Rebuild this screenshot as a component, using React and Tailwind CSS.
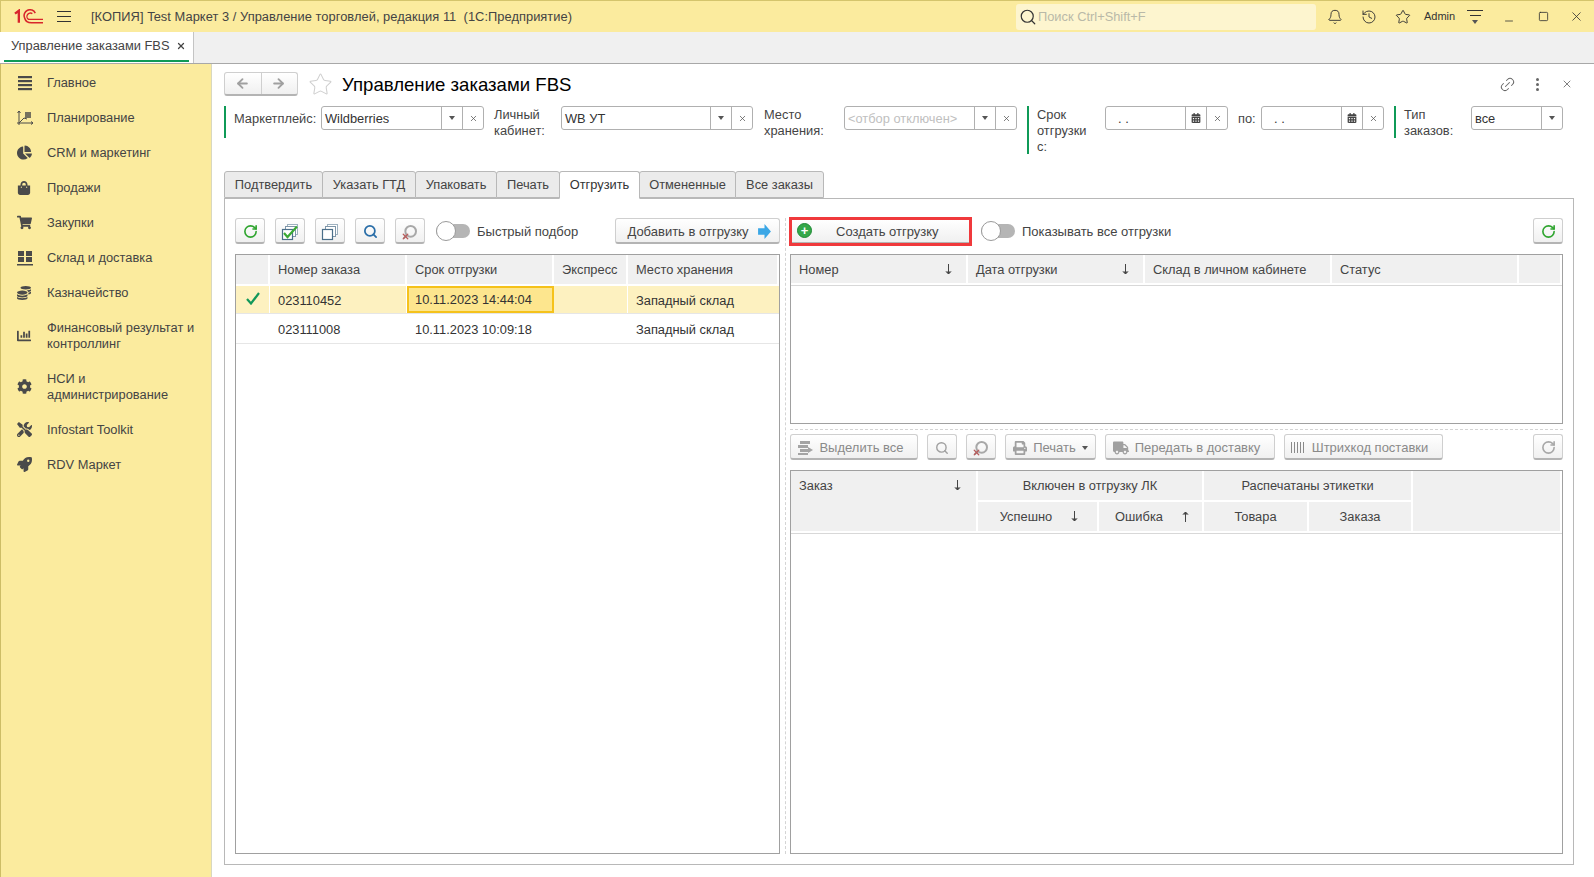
import React from 'react';
import { ArrowLeft, ArrowRight, Star, Bell, History, Link2, X, Minus, Square, Search, RotateCw } from 'lucide-react';
import {
  FaChartPie, FaShoppingBag, FaShoppingCart, FaCoins, FaChartBar, FaCog, FaTools, FaRocket, FaPrint, FaTruck, FaCalendarAlt,
} from 'react-icons/fa';

// 1C logo
const Logo = () => (
  <svg width="29" height="16" viewBox="0 0 30 16" fill="none" stroke="#d8262c" strokeWidth="1.6">
    <path d="M1 4.5 L5 1.5 V14" strokeWidth="2.4" />
    <path d="M22 4 A6 6 0 1 0 11 9 C12 13 15 14 18 14 H30" strokeWidth="1.6" />
    <path d="M19 4.5 A3.5 3.5 0 1 0 15 10.5 L30 10.5" strokeWidth="1.4" />
  </svg>
);

const LinesIcon = () => (
  <svg width="16" height="16" viewBox="0 0 16 16" fill="#4a4a4a">
    <rect x="1" y="1" width="14" height="2.2" />
    <rect x="1" y="5" width="14" height="2.2" />
    <rect x="1" y="9" width="14" height="2.2" />
    <rect x="1" y="13" width="14" height="2.2" />
  </svg>
);

const PlanIcon = () => (
  <svg width="16" height="16" viewBox="0 0 16 16" fill="none" stroke="#4a4a4a" strokeWidth="1">
    <path d="M2 1 V15 M0 13 H16 M2 13 L7 8 L10 9" />
    <path d="M0.5 3 L2 1 L3.5 3 M14 11.5 L16 13 L14 14.5" />
    <path d="M8 3 H14 M8 5 H14 M8 7 H14" strokeWidth="1.6" />
  </svg>
);

const GridIcon = () => (
  <svg width="16" height="16" viewBox="0 0 16 16" fill="#4a4a4a">
    <rect x="1" y="1" width="6" height="5" />
    <rect x="9" y="1" width="6" height="5" />
    <rect x="1" y="7" width="6" height="5" />
    <rect x="9" y="7" width="6" height="5" />
    <rect x="0" y="14" width="16" height="1.5" />
  </svg>
);

const navItems = [
  { label: 'Главное', icon: <LinesIcon />, h: 'h-[35px]' },
  { label: 'Планирование', icon: <PlanIcon />, h: 'h-[35px]' },
  { label: 'CRM и маркетинг', icon: <FaChartPie size={15} />, h: 'h-[35px]' },
  { label: 'Продажи', icon: <FaShoppingBag size={14} />, h: 'h-[35px]' },
  { label: 'Закупки', icon: <FaShoppingCart size={15} />, h: 'h-[35px]' },
  { label: 'Склад и доставка', icon: <GridIcon />, h: 'h-[35px]' },
  { label: 'Казначейство', icon: <FaCoins size={14} />, h: 'h-[35px]' },
  { label: 'Финансовый результат и контроллинг', icon: <FaChartBar size={14} />, h: 'h-[51px]' },
  { label: 'НСИ и администрирование', icon: <FaCog size={15} />, h: 'h-[51px]' },
  { label: 'Infostart Toolkit', icon: <FaTools size={15} />, h: 'h-[35px]' },
  { label: 'RDV Маркет', icon: <FaRocket size={15} />, h: 'h-[35px]' },
];

const tabs = [
  { label: 'Подтвердить', w: 'w-[99px]' },
  { label: 'Указать ГТД', w: 'w-[94px]' },
  { label: 'Упаковать', w: 'w-[82px]' },
  { label: 'Печать', w: 'w-[64px]' },
  { label: 'Отгрузить', w: 'w-[81px]', active: true },
  { label: 'Отмененные', w: 'w-[97px]' },
  { label: 'Все заказы', w: 'w-[89px]' },
];

const Caret = () => <div className="w-0 h-0 border-x-[3.5px] border-x-transparent border-t-[4px] border-t-[#555]" />;

const Field = ({ width, value, placeholder, mono, dropdown, calendar, clear = true }) => (
  <div className={`${width} h-6 flex border border-[#b0b0b0] rounded-[3px] bg-white shrink-0`}>
    <div className={`flex-1 min-w-0 leading-[23px] ${placeholder ? 'text-[#c0c0c0]' : 'text-[#333]'} ${mono ? 'pl-[12px]' : 'px-[3px]'}`}>
      {value}
    </div>
    {dropdown && (
      <div className="w-[21px] border-l border-[#b0b0b0] flex items-center justify-center"><Caret /></div>
    )}
    {calendar && (
      <div className="w-[21px] border-l border-[#b0b0b0] flex items-center justify-center">
        <FaCalendarAlt size={10} color="#444" />
      </div>
    )}
    {clear && (
      <div className="w-[21px] border-l border-[#b0b0b0] flex items-center justify-center">
        <X size={9} color="#555" strokeWidth={2} />
      </div>
    )}
  </div>
);

const Btn = ({ className = '', children, disabled }) => (
  <div className={`h-[26px] shrink-0 flex items-center justify-center rounded-[3px] border border-[#cfcfcf] border-b-2 border-b-[#b4b4b4] bg-gradient-to-b from-white to-[#f0f0f0] text-[13px] leading-[14px] pt-[2px] ${disabled ? 'text-[#8a8a8a]' : 'text-[#444]'} ${className}`}>
    {children}
  </div>
);

const Toggle = () => (
  <div className="w-[34px] h-[20px] shrink-0 relative flex items-center">
    <div className="w-full h-[14px] rounded-full bg-[#b5b5b5]" />
    <div className="absolute left-0 top-0 w-[20px] h-[20px] rounded-full bg-white border border-[#9a9a9a]" />
  </div>
);

const StackIcon = ({ check }) => (
  <svg width="18" height="18" viewBox="0 0 18 18" fill="none" stroke="#4b6f8a" strokeWidth="1">
    <rect x="6.5" y="1.5" width="10" height="10" fill="#fff" stroke="#9fb2c0" />
    <rect x="4.5" y="3.5" width="10" height="10" fill="#fff" stroke="#7d95a8" />
    <rect x="1.5" y="6.5" width="10" height="10" fill="#fff" strokeWidth="1.2" />
    {check && <path d="M3 10 L6.5 14 L16 3.5" stroke="#3aa935" strokeWidth="2.2" />}
  </svg>
);

const SelectAllIcon = () => (
  <svg width="16" height="16" viewBox="0 0 16 16" fill="#a4a4a4">
    <rect x="3" y="1" width="10" height="3" />
    <rect x="1" y="5" width="10" height="3" />
    <rect x="3" y="9" width="10" height="3" />
    <rect x="1" y="13" width="10" height="2" />
    <path d="M11 7 L16 10 L11 13 Z" />
  </svg>
);

const Refresh = ({ color = '#2fa52f' }) => <RotateCw size={15} color={color} strokeWidth={2.6} />;

const ClearSearch = ({ color = '#a8a8a8' }) => (
  <span className="relative inline-flex">
    <Search size={16} color={color} strokeWidth={3} className="-scale-x-100" />
    <X size={9} color="#b85c5c" strokeWidth={3.4} className="absolute left-[-1px] bottom-[-1px]" />
  </span>
);

const SortArrow = ({ up }) => (
  <svg width="7" height="11" viewBox="0 0 7 11" fill="none" stroke="#444" strokeWidth="1" className={up ? 'rotate-180' : ''}>
    <path d="M3.5 0 V10" />
    <path d="M1 7.5 L3.5 10 L6 7.5" fill="#444" />
  </svg>
);

const HeadCell = ({ className = '', children }) => (
  <div className={`bg-[#f0f0f0] border-r-2 border-b-2 border-white flex items-center ${className}`}>{children}</div>
);

export default function App() {
  return (
    <div className="w-[1594px] h-[877px] flex flex-col overflow-hidden bg-white text-[12.85px] text-[#444] font-['Liberation_Sans',Arial,sans-serif]">
      {/* Title bar */}
      <div className="h-8 shrink-0 flex items-center bg-[#fbeb9e] border-t border-[#d4c46c] border-l pl-[13px]">
        <Logo />
        <div className="ml-[14px] w-[14px] flex flex-col gap-[4px]">
          <div className="h-px bg-[#333]" />
          <div className="h-px bg-[#333]" />
          <div className="h-px bg-[#333]" />
        </div>
        <div className="ml-[20px] w-[921px] text-[#444] tracking-[0.05px]">[КОПИЯ] Test Маркет 3 / Управление торговлей, редакция 11&nbsp; (1С:Предприятие)</div>
        <div className="ml-[4px] w-[300px] h-[26px] rounded-[3px] bg-[#fdf5cf] flex items-center pl-[3px] text-[#b9b9a8] gap-[1px]">
          <Search size={18} color="#333" strokeWidth={1.6} />
          Поиск Ctrl+Shift+F
        </div>
        <Bell size={16} color="#333" strokeWidth={1.4} className="ml-[11px]" />
        <History size={16} color="#333" strokeWidth={1.4} className="ml-[18px]" />
        <Star size={16} color="#333" strokeWidth={1.4} className="ml-[18px]" />
        <div className="ml-[13px] w-[32px] text-[11px] text-[#333]">Admin</div>
        <div className="ml-[11px] w-[16px] flex flex-col items-center gap-[4px]">
          <div className="h-px w-full bg-[#333]" />
          <div className="h-px w-[11px] bg-[#333]" />
          <Caret />
        </div>
        <Minus size={12} color="#333" strokeWidth={1.6} className="ml-[20px] translate-y-[4px]" />
        <Square size={11} color="#333" strokeWidth={1.8} className="ml-[23px]" />
        <X size={15} color="#333" strokeWidth={1.3} className="ml-[20px]" />
      </div>

      {/* Open tabs */}
      <div className="h-8 shrink-0 flex bg-[#f0f0f0] border-b border-[#a8a8a8]">
        <div className="w-[194px] bg-white border-r border-[#c4c4c4] pl-[4px] pr-[3px] flex flex-col">
          <div className="h-[28px] flex items-center justify-between pl-[7px] pr-[4px] text-[#444]">
            <span>Управление заказами FBS</span>
            <X size={10} color="#444" strokeWidth={3} />
          </div>
          <div className="h-[2px] mr-[1px] bg-[#0f9a57]" />
        </div>
      </div>

      <div className="flex-1 min-h-0 flex">
        {/* Sidebar */}
        <div className="w-[212px] shrink-0 bg-[#fbeb9e] border-l border-r border-l-[#cdbd66] border-r-[#d8d8c0] pt-[1px]">
          {navItems.map((it) => (
            <div key={it.label} className={`${it.h} flex items-center text-[#444]`}>
              <div className="w-[46px] pl-[16px] shrink-0 flex justify-start text-[#4a4a4a]">{it.icon}</div>
              <div className="leading-[16px] pr-[10px]">{it.label}</div>
            </div>
          ))}
        </div>

        {/* Main */}
        <div className="flex-1 min-w-0 pl-3 pr-[20px]">
          <div className="h-[24px] mt-[8px] flex items-center">
            <div className="w-[74px] h-[24px] flex rounded-[3px] border border-[#cfcfcf] border-b-2 border-b-[#b4b4b4] bg-gradient-to-b from-white to-[#f0f0f0]">
              <div className="flex-1 flex items-center justify-center border-r border-[#cfcfcf]"><ArrowLeft size={15} color="#a0a0a0" strokeWidth={3} /></div>
              <div className="flex-1 flex items-center justify-center"><ArrowRight size={15} color="#a0a0a0" strokeWidth={3} className="-ml-[2px]" /></div>
            </div>
            <Star size={25} color="#cfcfcf" strokeWidth={1} className="ml-[10px]" />
            <div className="ml-[9px] pt-[2px] text-[18.6px] text-black">Управление заказами FBS</div>
            <div className="flex-1" />
            <Link2 size={17} color="#666" strokeWidth={1.4} className="-rotate-45" />
            <div className="ml-[20px] flex flex-col gap-[2px]">
              <div className="w-[3px] h-[3px] rounded-full bg-[#666]" />
              <div className="w-[3px] h-[3px] rounded-full bg-[#666]" />
              <div className="w-[3px] h-[3px] rounded-full bg-[#666]" />
            </div>
            <X size={12} color="#555" strokeWidth={1.5} className="ml-[22px] mr-[1px]" />
          </div>

          {/* Filters */}
          <div className="mt-[10px] h-[65px] flex items-start leading-[16px]">
            <div className="w-[2px] h-[32px] bg-[#0f9a57] shrink-0" />
            <div className="ml-[8px] w-[87px] shrink-0 leading-[25px]">Маркетплейс:</div>
            <Field width="w-[163px]" value="Wildberries" dropdown />
            <div className="ml-[10px] w-[67px] shrink-0 pt-px">Личный<br />кабинет:</div>
            <Field width="w-[192px]" value="WB УТ" dropdown />
            <div className="ml-[11px] w-[80px] shrink-0 pt-px">Место<br />хранения:</div>
            <Field width="w-[173px]" value="<отбор отключен>" placeholder dropdown />
            <div className="ml-[10px] w-[2px] h-[48px] bg-[#0f9a57] shrink-0" />
            <div className="ml-[8px] w-[68px] shrink-0 pt-px">Срок<br />отгрузки<br />с:</div>
            <Field width="w-[123px]" value=".  ." mono calendar />
            <div className="ml-[10px] w-[23px] shrink-0 leading-[25px]">по:</div>
            <Field width="w-[123px]" value=".  ." mono calendar />
            <div className="ml-[10px] w-[2px] h-[32px] bg-[#0f9a57] shrink-0" />
            <div className="ml-[8px] w-[67px] shrink-0 pt-px">Тип<br />заказов:</div>
            <Field width="w-[92px]" value="все" dropdown clear={false} />
          </div>

          {/* Form tabs */}
          <div className="h-[27px] flex">
            {tabs.map((t) => (
              <div
                key={t.label}
                className={`${t.w} shrink-0 rounded-t-[3px] border border-[#b8b8b8] -mr-px flex items-center justify-center ${t.active ? 'bg-white border-b-white text-[#333] relative z-10 h-[28px]' : 'bg-[#ebebeb] text-[#444]'}`}
              >
                {t.label}
              </div>
            ))}
          </div>

          {/* Panel */}
          <div className="h-[667px] border border-[#b8b8b8] flex pl-[10px] pt-[19px] pr-[10px] pb-[10px]">
            {/* Left column */}
            <div className="w-[545px] shrink-0 flex flex-col">
              <div className="h-[26px] flex items-center">
                <Btn className="w-[30px]"><Refresh /></Btn>
                <Btn className="w-[30px] ml-[10px]"><StackIcon check /></Btn>
                <Btn className="w-[30px] ml-[10px]"><StackIcon /></Btn>
                <Btn className="w-[30px] ml-[10px]"><Search size={15} color="#2a6ea8" strokeWidth={2.8} /></Btn>
                <Btn className="w-[30px] ml-[10px]" disabled><ClearSearch /></Btn>
                <div className="ml-[11px]"><Toggle /></div>
                <div className="ml-[7px] flex-1 text-[13px] pt-[2px]">Быстрый подбор</div>
                <Btn className="w-[165px] gap-[9px] pl-[3px]">
                  Добавить в отгрузку
                  <svg width="13" height="15" viewBox="0 0 12 14"><path d="M0 4 H6 V0 L12 7 L6 14 V10 H0 Z" fill="#3ba7e6" /></svg>
                </Btn>
              </div>
              <div className="mt-[10px] flex-1 border border-[#a0a0a0]">
                <div className="grid grid-cols-[34px_137px_147px_74px_1fr] h-[31px]">
                  <HeadCell />
                  <HeadCell className="pl-[8px]">Номер заказа</HeadCell>
                  <HeadCell className="pl-[8px]">Срок отгрузки</HeadCell>
                  <HeadCell className="pl-[8px]">Экспресс</HeadCell>
                  <HeadCell className="pl-[8px] border-r-0">Место хранения</HeadCell>
                </div>
                <div className="grid grid-cols-[34px_137px_147px_74px_1fr] h-[28px] bg-[#fdf1c0] border-b border-[#e6e6e6] text-[#333]">
                  <div className="flex items-center justify-center border-r border-white">
                    <svg width="14" height="13" viewBox="0 0 14 13" fill="none" stroke="#11985a" strokeWidth="2.2" className="-mt-[3px]"><path d="M1 7 L5 11.5 L13 1" /></svg>
                  </div>
                  <div className="flex items-center pl-[8px] pt-[2px] border-r border-white">023110452</div>
                  <div className="flex items-center pl-[6px] pt-[1px] bg-[#fde68e] border-2 border-[#f5c21b]">10.11.2023 14:44:04</div>
                  <div className="border-r border-white" />
                  <div className="flex items-center pl-[8px] pt-[2px]">Западный склад</div>
                </div>
                <div className="grid grid-cols-[34px_137px_147px_74px_1fr] h-[30px] border-b border-[#e6e6e6] text-[#333]">
                  <div />
                  <div className="flex items-center pl-[8px] pt-[2px]">023111008</div>
                  <div className="flex items-center pl-[8px] pt-[2px]">10.11.2023 10:09:18</div>
                  <div />
                  <div className="flex items-center pl-[8px] pt-[2px]">Западный склад</div>
                </div>
              </div>
            </div>

            {/* Splitter */}
            <div className="w-[10px] shrink-0 flex justify-center"><div className="border-l border-dashed border-[#d4d4d4]" /></div>

            {/* Right column */}
            <div className="w-[773px] shrink-0 flex flex-col">
              <div className="h-[26px] flex items-center">
                <div className="w-[183px] h-[29px] -ml-[1px] shrink-0 border-[3px] border-[#f0393c] flex text-[13px]">
                  <div className="flex-1 flex items-center bg-gradient-to-b from-white to-[#f0f0f0] border-b border-[#b4b4b4] pl-[5px] text-[#444]">
                    <span className="w-[15px] h-[15px] rounded-full bg-[#35a84a] border border-[#1f8a35] flex items-center justify-center text-white font-bold text-[13px] leading-none">+</span>
                    <span className="ml-[24px] pt-[2px]">Создать отгрузку</span>
                  </div>
                </div>
                <div className="ml-[9px]"><Toggle /></div>
                <div className="ml-[7px] flex-1 text-[13px] pt-[2px]">Показывать все отгрузки</div>
                <Btn className="w-[30px]"><Refresh /></Btn>
              </div>
              <div className="mt-[10px] h-[170px] border border-[#a0a0a0]">
                <div className="grid grid-cols-[177px_177px_187px_187px_1fr] h-[31px] border-b border-[#d8d8d8]">
                  <HeadCell className="pl-[8px] pr-[14px] pt-px justify-between">Номер<SortArrow /></HeadCell>
                  <HeadCell className="pl-[8px] pr-[14px] pt-px justify-between">Дата отгрузки<SortArrow /></HeadCell>
                  <HeadCell className="pl-[8px] pt-px">Склад в личном кабинете</HeadCell>
                  <HeadCell className="pl-[8px] pt-px">Статус</HeadCell>
                  <HeadCell className="border-r-0" />
                </div>
              </div>
              <div className="mt-[5px] border-t border-dashed border-[#d4d4d4]" />
              <div className="mt-[4px] h-[26px] flex items-center text-[#8a8a8a]">
                <Btn disabled className="w-[128px] gap-[6px] pr-[7px]"><SelectAllIcon />Выделить все</Btn>
                <Btn disabled className="w-[30px] ml-[9px]"><Search size={14} color="#a0a0a0" strokeWidth={2.4} /></Btn>
                <Btn disabled className="w-[30px] ml-[9px]"><ClearSearch /></Btn>
                <Btn disabled className="w-[91px] ml-[9px] gap-[6px]"><FaPrint size={14} color="#a0a0a0" />Печать<Caret /></Btn>
                <Btn disabled className="w-[170px] ml-[9px] gap-[6px] pr-[7px]"><FaTruck size={16} color="#a0a0a0" />Передать в доставку</Btn>
                <Btn disabled className="w-[159px] ml-[9px] gap-[6px] pr-[8px]">
                  <span className="w-[15px] h-[11px] bg-[repeating-linear-gradient(90deg,#8a8a8a_0,#8a8a8a_1px,transparent_1px,transparent_3px)]" />
                  Штрихкод поставки
                </Btn>
                <div className="flex-1" />
                <Btn disabled className="w-[30px]"><Refresh color="#a8a8a8" /></Btn>
              </div>
              <div className="mt-[10px] flex-1 border border-[#a0a0a0]">
                <div className="grid grid-cols-[187px_121px_105px_105px_104px_1fr] grid-rows-[31px_31px]">
                  <HeadCell className="row-span-2 !items-start pt-[5px] pl-[8px] pr-[15px] justify-between">Заказ<span className="pt-[4px]"><SortArrow /></span></HeadCell>
                  <HeadCell className="col-span-2 justify-center">Включен в отгрузку ЛК</HeadCell>
                  <HeadCell className="col-span-2 justify-center">Распечатаны этикетки</HeadCell>
                  <HeadCell className="row-span-2 border-r-0" />
                  <HeadCell className="justify-center gap-[19px] pl-[3px]">Успешно<SortArrow /></HeadCell>
                  <HeadCell className="justify-center gap-[19px] pl-[3px]">Ошибка<SortArrow up /></HeadCell>
                  <HeadCell className="justify-center">Товара</HeadCell>
                  <HeadCell className="justify-center">Заказа</HeadCell>
                </div>
                <div className="border-t border-[#d8d8d8]" />
              </div>
            </div>
          </div>
        </div>
      </div>
    </div>
  );
}
